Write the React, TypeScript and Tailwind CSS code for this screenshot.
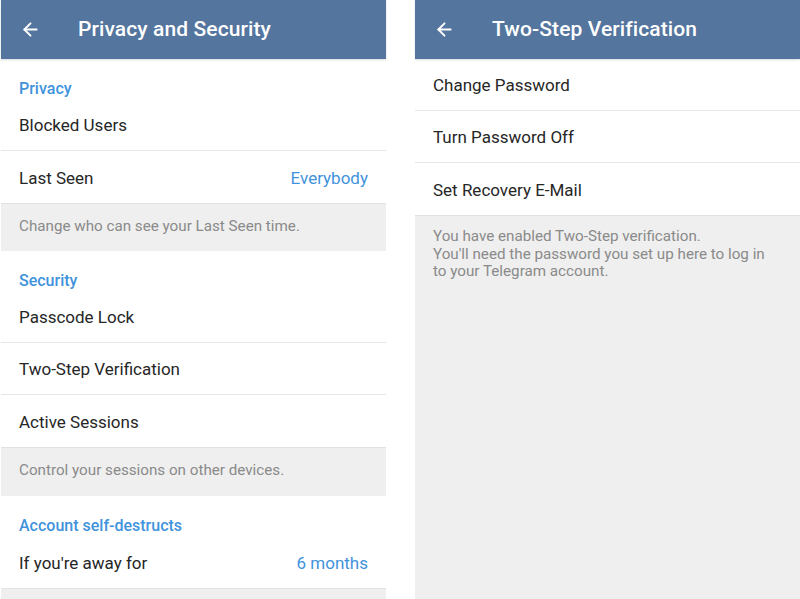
import { ArrowLeft } from 'lucide-react';

const font = { fontFamily: 'Roboto, "Liberation Sans", sans-serif' };

function Header({ title }: { title: string }) {
  return (
    <div className="h-[59px] bg-[#54759e] flex items-center shadow-[0_1px_2px_rgba(0,0,0,0.15)] relative z-10">
      <ArrowLeft className="ml-[19px] w-[21px] h-[21px] text-white" strokeWidth={2.2} />
      <span className="ml-[37px] pt-[1px] text-white text-[21px] font-medium tracking-[0.1px]">{title}</span>
    </div>
  );
}

function Title({ text }: { text: string }) {
  return <div className="h-[40px] pt-[19px] px-[18px] text-[16px] leading-[22px] font-medium text-[#4193dc]">{text}</div>;
}

function Row({ label, value, divider = true }: { label: string; value?: string; divider?: boolean }) {
  return (
    <div className={`h-[52px] pt-[3px] flex items-center justify-between px-[18px] ${divider ? 'border-b border-[#e6e6e6]' : ''}`}>
      <span className="text-[17px] text-[#262626]">{label}</span>
      {value && <span className="text-[17px] text-[#4193dc]">{value}</span>}
    </div>
  );
}

function Note({ children, className = '' }: { children: React.ReactNode; className?: string }) {
  return (
    <div className={`bg-[#efefef] border-t border-[#e2e2e2] px-[18px] text-[15.2px] text-[#8a8a8a] ${className}`}>
      {children}
    </div>
  );
}

export default function App() {
  return (
    <div className="w-[800px] h-[599px] bg-white flex overflow-hidden" style={font}>
      <div className="ml-[1px] w-[385px] flex flex-col">
        <Header title="Privacy and Security" />
        <Title text="Privacy" />
        <Row label="Blocked Users" />
        <Row label="Last Seen" value="Everybody" divider={false} />
        <Note className="h-[48px] pt-[11px]">Change who can see your Last Seen time.</Note>
        <Title text="Security" />
        <Row label="Passcode Lock" />
        <Row label="Two-Step Verification" />
        <Row label="Active Sessions" divider={false} />
        <Note className="h-[49px] pt-[11px]">Control your sessions on other devices.</Note>
        <Title text="Account self-destructs" />
        <Row label="If you're away for" value="6 months" divider={false} />
        <Note className="flex-1">{''}</Note>
      </div>
      <div className="ml-[29px] w-[385px] flex flex-col">
        <Header title="Two-Step Verification" />
        <Row label="Change Password" />
        <Row label="Turn Password Off" />
        <Row label="Set Recovery E-Mail" divider={false} />
        <Note className="flex-1 pt-[12px] leading-[17.5px]">
          You have enabled Two-Step verification.
          <br />
          You'll need the password you set up here to log in
          <br />
          to your Telegram account.
        </Note>
      </div>
    </div>
  );
}
